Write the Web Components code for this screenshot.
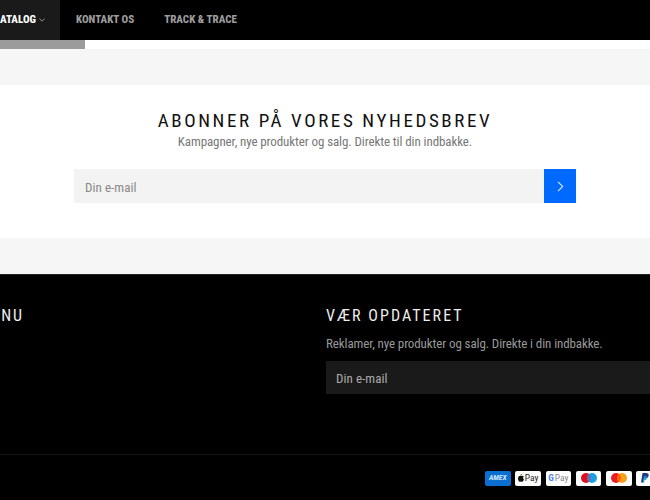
<!DOCTYPE html>
<html lang="da"><head><meta charset="utf-8">
<style>
html,body{margin:0;padding:0;height:500px;overflow:hidden;background:#fff}
body{font-family:"Roboto Condensed",Roboto,sans-serif;font-size:14px}
</style></head><body>
<site-nav></site-nav>
<loader-strip></loader-strip>
<div-band></div-band>
<news-letter></news-letter>
<div-band></div-band>
<site-footer></site-footer>
<script>
const F='"Roboto Condensed",Roboto,sans-serif';
function def(name,html){customElements.define(name,class extends HTMLElement{constructor(){super();this.attachShadow({mode:'open'}).innerHTML=html}})}
def('site-nav',`<style>:host{display:flex;height:40px;background:#000;color:#fff;font:800 11px/40px ${F};letter-spacing:0;overflow:hidden}
.a{width:60px;background:#1a1a1a;display:flex;align-items:center;justify-content:flex-end;gap:3px;padding-right:15px;box-sizing:border-box;white-space:nowrap;flex:none;direction:rtl}
.a span{direction:ltr}
.l{color:#9c9c9c;margin-left:16px;white-space:nowrap}.l+.l{margin-left:30px}svg{display:block}</style>
<div class="a"><svg width="6" height="4" viewBox="0 0 6 4" fill="none" stroke="#999"><path d="M.5.7 3 3.2 5.5.7"/></svg><span>ATALOG</span></div><span class="l">KONTAKT OS</span><span class="l">TRACK &amp; TRACE</span>`);
def('loader-strip',`<style>:host{display:block;height:9px;background:#fff}div{width:85px;height:9px;background:#9b9b9b}</style><div></div>`);
def('div-band',`<style>:host{display:block;height:36px;background:#f6f6f6}</style>`);
def('news-letter',`<style>:host{display:block;height:153px;box-sizing:border-box;padding-top:23px;text-align:center}
h2{margin:0;font:400 19px/26px ${F};letter-spacing:2.6px;color:#111}
p{margin:0;font:400 13px/16px ${F};color:#777;letter-spacing:-.1px}
form{display:flex;margin:19px 74px 0;height:34px}
.i{flex:1;background:#f3f3f3;color:#888;text-align:left;padding-left:11px;line-height:37px;font-size:13px;letter-spacing:.05px}
.b{width:32px;background:#0069ff;display:flex;align-items:center;justify-content:center}</style>
<h2>ABONNER PÅ VORES NYHEDSBREV</h2><p>Kampagner, nye produkter og salg. Direkte til din indbakke.</p>
<form><div class="i">Din e-mail</div><div class="b"><svg width="7" height="11" viewBox="0 0 7 11" fill="none" stroke="#dbe9ff" stroke-width="1.100"><path d="M1 .8 5.700 5.500 1 10.200"/></svg></div></form>`);
def('site-footer',`<style>:host{display:block;height:226px;background:#000;border-top:1px solid #222;box-sizing:border-box;overflow:hidden;color:#fff}
.cols{display:grid;grid-template-columns:326px 1fr;padding-top:31px;height:180px;box-sizing:border-box;border-bottom:1px solid #141414}
h3{margin:0;font:400 16px/20px ${F};letter-spacing:2.05px;color:#eee}
.n{margin-left:-23px;white-space:nowrap}
p{margin:9px 0 0;font:400 13px/17px ${F};color:#999;letter-spacing:-.11px;white-space:nowrap}
.e{margin-top:9px;margin-right:-40px;height:33px;background:#1a1a1a;color:#aaa;font:400 13px/35px ${F};padding-left:10px;letter-spacing:.05px}
.pay{display:flex;gap:4.8px;margin:15.500px 0 0 485px;width:200px}
.c{flex:none;width:25.5px;height:15px;border-radius:2px;background:#fff;display:flex;align-items:center;justify-content:center;gap:1px;font:700 7.500px/1 ${F};color:#222}
.c svg{display:block}</style>
<div class="cols"><h3 class="n">MENU</h3><div><h3>VÆR OPDATERET</h3><p>Reklamer, nye produkter og salg. Direkte i din indbakke.</p><div class="e">Din e-mail</div></div></div>
<div class="pay"><div class="c" style="background:#0a6fd1;color:#cfe6ff;font-style:italic">AMEX</div>
<div class="c"><svg width="6" height="8" viewBox="0 0 6 8" fill="#111"><path d="M3.900 0c.1.8-.6 1.600-1.300 1.600-.1-.8.6-1.500 1.300-1.600zM3 2c.4 0 .9-.3 1.500-.3.5 0 1 .2 1.300.7-1.100.7-.9 2.300.2 2.800C5.600 6.300 5 7.700 4.200 7.700c-.5 0-.7-.3-1.200-.3s-.7.300-1.200.3C.9 7.700 0 6 0 4.500 0 3 1 1.800 2.100 1.800c.4 0 .6.200.9.200z"/></svg><span style="font-size:9.500px;font-weight:400">Pay</span></div>
<div class="c" style="font-weight:400;color:#888;font-size:9.500px"><span style="font-weight:700;color:#4285f4">G</span><span>Pay</span></div>
<div class="c"><svg width="18" height="12" viewBox="0 0 18 12"><circle cx="6" cy="6" r="5" fill="#e3101c"/><circle cx="12" cy="6" r="5" fill="#1c9fe0"/><path d="M9 2a5 5 0 0 1 0 8 5 5 0 0 1 0-8" fill="#6c6bbd"/></svg></div>
<div class="c"><svg width="18" height="12" viewBox="0 0 18 12"><circle cx="6" cy="6" r="5" fill="#eb1c23"/><circle cx="12" cy="6" r="5" fill="#f79e1b"/><path d="M9 2a5 5 0 0 1 0 8 5 5 0 0 1 0-8" fill="#ff5f00"/></svg></div>
<div class="c" style="justify-content:flex-start;padding-left:5px;box-sizing:border-box"><svg width="8" height="10" viewBox="0 0 8 10"><path d="M1.500 0H5c2 0 3 1 2.600 2.800C7.200 4.600 6 5.500 4.200 5.500H3L2.400 9.500H0z" fill="#253b80"/><path d="M3 3h3L5.300 7H3.500l-.3 2.500H1.500z" fill="#179bd7" opacity=".8"/></svg></div></div>`);
</script></body></html>
